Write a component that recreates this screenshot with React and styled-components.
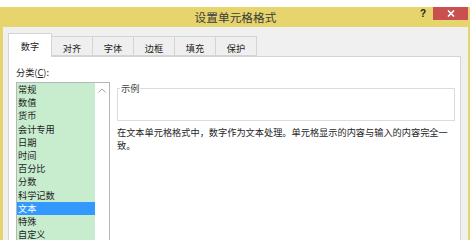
import styled, { createGlobalStyle } from 'styled-components';

const CJK = '"Noto Sans CJK SC", "Noto Sans", sans-serif';

const GlobalStyle = createGlobalStyle`
  body {
    margin: 0;
    background: #fff;
    font-family: ${CJK};
    overflow: hidden;
  }
`;

const categories = [
  '常规', '数值', '货币', '会计专用', '日期', '时间',
  '百分比', '分数', '科学记数', '文本', '特殊', '自定义',
];

const tabs = ['数字', '对齐', '字体', '边框', '填充', '保护'];

const App = () => (
  <Page>
    <GlobalStyle />
    <Window>
      <TitleBar>
        <span />
        <Title>设置单元格格式</Title>
        <Controls>
          <Help>?</Help>
          <CloseButton>
            <svg width="8" height="7" viewBox="0 0 8 7">
              <path d="M1 0.5 L7 6.5 M7 0.5 L1 6.5" stroke="#fff" strokeWidth="1.6" />
            </svg>
          </CloseButton>
        </Controls>
      </TitleBar>
      <Body>
        <TabRow>
          {tabs.map((t, i) => (
            <Tab key={t} $active={i === 0}>{t}</Tab>
          ))}
        </TabRow>
        <Panel>
          <Label>分类(<u>C</u>):</Label>
          <Columns>
            <ListBox>
              <Items>
                {categories.map((c) => (
                  <Item key={c} $selected={c === '文本'}>{c}</Item>
                ))}
              </Items>
              <Scrollbar>
                <svg width="8" height="5" viewBox="0 0 8 5">
                  <path d="M0.5 4.5 L4 1 L7.5 4.5" fill="none" stroke="#a6a6a6" strokeWidth="1" />
                </svg>
              </Scrollbar>
            </ListBox>
            <RightColumn>
              <Group>
                <Legend>示例</Legend>
              </Group>
              <Description>
                在文本单元格格式中，数字作为文本处理。单元格显示的内容与输入的内容完全一致。
              </Description>
            </RightColumn>
          </Columns>
        </Panel>
      </Body>
    </Window>
  </Page>
);

const Page = styled.div`
  width: 475px;
  height: 240px;
  padding-top: 7px;
  box-sizing: border-box;
`;

const Window = styled.div`
  width: 470px;
  height: 233px;
  box-sizing: border-box;
  background: #f0f0f0;
  border-left: 3px solid #e6d46c;
  border-right: 2px solid #e6d46c;
  display: flex;
  flex-direction: column;
`;

const TitleBar = styled.div`
  height: 20px;
  flex-shrink: 0;
  background: #e6d46c;
  display: grid;
  grid-template-columns: 1fr auto 1fr;
  align-items: start;
`;

const Title = styled.div`
  font-size: 11.7px;
  line-height: 20px;
  color: #3c3c3c;
  padding-top: 0;
`;

const Controls = styled.div`
  justify-self: end;
  display: flex;
  align-items: flex-start;
  gap: 7px;
`;

const Help = styled.span`
  font-family: "Liberation Sans", sans-serif;
  font-weight: bold;
  font-size: 10px;
  line-height: 12px;
  margin-top: 1px;
  color: #222;
`;

const CloseButton = styled.div`
  width: 35px;
  height: 13px;
  background: #c9504f;
  display: flex;
  align-items: center;
  justify-content: center;
`;

const Body = styled.div`
  flex: 1;
  display: flex;
  flex-direction: column;
  padding: 6px 7px 0 5px;
`;

const TabRow = styled.div`
  display: flex;
  align-items: flex-end;
  height: 23px;
  flex-shrink: 0;
`;

const Tab = styled.div`
  box-sizing: border-box;
  width: ${(p) => (p.$active ? '44px' : '42px')};
  height: ${(p) => (p.$active ? '24px' : '20px')};
  margin-left: ${(p) => (p.$active ? '0' : '-1px')};
  margin-bottom: ${(p) => (p.$active ? '-1px' : '0')};
  position: relative;
  z-index: ${(p) => (p.$active ? 2 : 1)};
  background: ${(p) => (p.$active ? '#fff' : '#efefef')};
  border: 1px solid #d4d4d4;
  border-bottom: ${(p) => (p.$active ? 'none' : '1px solid #d4d4d4')};
  font-size: 9.2px;
  color: #222;
  display: flex;
  justify-content: center;
  padding-top: ${(p) => (p.$active ? '6px' : '5px')};
  line-height: 12px;
`;

const Panel = styled.div`
  flex: 1;
  background: #fff;
  border: 1px solid #d4d4d4;
  padding: 9px 5px 0 7px;
  display: flex;
  flex-direction: column;
  min-height: 0;
  overflow: hidden;
`;

const Label = styled.div`
  font-size: 9.2px;
  line-height: 13px;
  color: #222;
  margin-bottom: 3px;

  u {
    text-underline-offset: 1px;
  }
`;

const Columns = styled.div`
  display: flex;
  gap: 7px;
  align-items: flex-start;
`;

const ListBox = styled.div`
  width: 94px;
  height: 170px;
  box-sizing: border-box;
  border: 1px solid #b4b6bb;
  display: flex;
  flex-shrink: 0;
`;

const Items = styled.div`
  flex: 1;
  background: #c7ecce;
`;

const Item = styled.div`
  font-size: 9.2px;
  line-height: 13.2px;
  height: 13.2px;
  padding-left: 1px;
  color: ${(p) => (p.$selected ? '#fff' : '#1e1e1e')};
  background: ${(p) => (p.$selected ? '#3399ff' : 'transparent')};
`;

const Scrollbar = styled.div`
  width: 14px;
  background: #fff;
  display: flex;
  justify-content: center;
  padding-top: 5px;
  box-sizing: border-box;
`;

const RightColumn = styled.div`
  flex: 1;
  display: flex;
  flex-direction: column;
`;

const Group = styled.fieldset`
  margin: 0;
  padding: 0 4px;
  height: 39px;
  box-sizing: border-box;
  border: 1px solid #dcdcdc;
  min-width: 0;
`;

const Legend = styled.legend`
  font-size: 9.2px;
  line-height: 12px;
  padding: 0 1px;
  margin-left: -2px;
  color: #444;
`;

const Description = styled.div`
  margin-top: 5px;
  font-size: 9.2px;
  line-height: 13px;
  color: #1e1e1e;
`;

export default App;
